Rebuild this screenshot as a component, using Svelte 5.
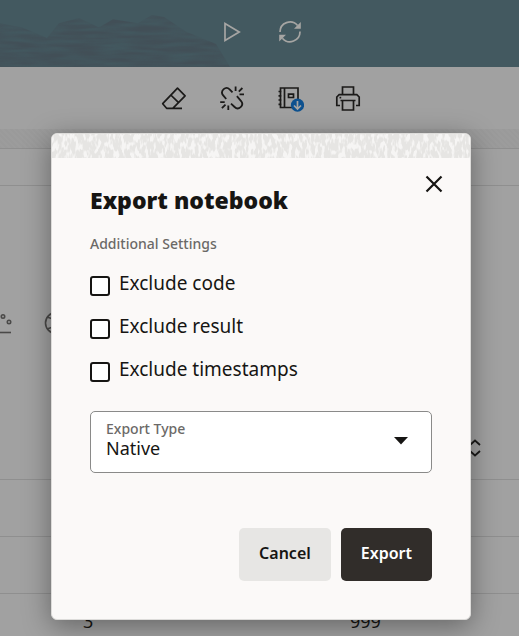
<script>
  let excludes = $state([
    { id: 'code', label: 'Exclude code', checked: false },
    { id: 'result', label: 'Exclude result', checked: false },
    { id: 'timestamps', label: 'Exclude timestamps', checked: false }
  ]);
  let exportType = $state('Native');
</script>

<div class="page">
  <header class="topbar">
    <svg class="waves" viewBox="0 0 230 50" preserveAspectRatio="none" aria-hidden="true">
      <defs>
        <filter id="grain" x="0" y="0" width="100%" height="100%" color-interpolation-filters="sRGB">
          <feTurbulence type="fractalNoise" baseFrequency="0.03 0.25" numOctaves="2" seed="4" />
          <feColorMatrix values="0 0 0 0 0.259  0 0 0 0 0.310  0 0 0 0 0.341  1.6 0 0 0 -0.2" />
          <feComposite operator="in" in2="SourceGraphic" />
        </filter>
      </defs>
      <path filter="url(#grain)" d="M0 8l22 4 25 10 12-14 20-5 20 9 14-8 25 4 14-8 12 2 22 14 30 12 14 22H0z" />
    </svg>
    <button class="icon" aria-label="Run">
      <svg width="24" height="24" viewBox="0 0 24 24" fill="none" stroke="#a6a5a3" stroke-width="1.7"><path d="M5 3.600v16.800L19.200 12z" /></svg>
    </button>
    <button class="icon" aria-label="Refresh">
      <svg width="24" height="24" viewBox="0 0 24 24" fill="none" stroke="#a6a5a3" stroke-width="1.700">
        <path d="M2 12A10 10 0 0 1 19.600 5.500M22 11.500A10 10 0 0 1 4.400 18.200" />
        <path d="M22.800 2v6.700H16zM1.200 21.500v-6.700H8z" fill="#a6a5a3" stroke="none" />
      </svg>
    </button>
  </header>

  <nav class="toolbar" aria-label="Notebook">
    <button class="icon" aria-label="Clear result">
      <svg width="26" height="26" viewBox="0 0 26 26" fill="none" stroke="#1b1a19" stroke-width="1.700" stroke-linejoin="round">
        <path d="M16.500 3.200l7.600 7.600-12.300 12.500H5.600l-3.900-4.600zM9.800 10l7.800 7.700M11 23.300h10" />
      </svg>
    </button>
    <button class="icon" aria-label="Unlink">
      <svg width="26" height="26" viewBox="0 0 26 26" fill="none" stroke="#1b1a19" stroke-width="1.800">
        <path d="M7.200 14L4 10.200C0.800 5.800 6.800 0.500 10.600 4.300L13.500 7.400M12 18.600l3.600 3.400c3.900 3.900 10-1.700 6.500-5.800l-4.200-5" />
        <path d="M16.600 1.500v4.500M23.400 3l-3.600 3.600M20.500 9.300H25M1.200 17.200h4.500M6.500 19.600l-3.600 3.600M9.300 20.500V25" />
      </svg>
    </button>
    <button class="icon" aria-label="Export notebook">
      <svg width="28" height="28" viewBox="0 0 28 28" fill="none" stroke="#1b1a19" stroke-width="1.700">
        <path d="M4.500 4H22v19.500H4.500zM8.500 4v19.500M12.500 10.200h5v3.300h-5zM2.500 7.500h3M2.500 11.800h3M2.500 16h3M2.500 20.300h3" />
        <circle cx="21.500" cy="21.200" r="6.600" fill="#0d518f" stroke="none" />
        <path d="M21.500 17v8M18 21.500l3.500 3.500 3.500-3.500" stroke="#a6a5a3" />
      </svg>
    </button>
    <button class="icon" aria-label="Print">
      <svg width="26" height="26" viewBox="0 0 26 26" fill="none" stroke="#1b1a19" stroke-width="1.700">
        <path d="M7.500 9.700V2h11v7.700M5 20.500H1.800V12l2.400-2.300h17.600l2.400 2.300v8.500H21M5.500 15.500h15M7.500 15.500v9.500h11v-9.500" />
        <path d="M4.500 12.600h1.700" />
      </svg>
    </button>
  </nav>

  <div class="band"></div>
  <div class="strip"></div>
  <section class="results">
    <div class="charts">
      <svg width="12" height="24" viewBox="0 0 12 24" fill="none" stroke="#4a4948" stroke-width="1.600" aria-hidden="true">
        <circle cx="3" cy="5.500" r="1.700" /><circle cx="9" cy="11" r="1.700" /><path d="M0 21.500h11" />
      </svg>
      <svg width="24" height="24" viewBox="0 0 24 24" fill="none" stroke="#4a4948" stroke-width="1.600" aria-hidden="true">
        <circle cx="12" cy="12" r="10.500" /><path d="M3 6q9 4 18 0M3 18q9-4 18 0M12 1.500q-7 10 0 21" />
      </svg>
    </div>
    <div class="sort">
      <svg width="14" height="18" viewBox="0 0 14 18" fill="none" stroke="#1b1a19" stroke-width="1.800" aria-hidden="true">
        <path d="M2 6l5-4.500L12 6M2 12l5 4.500L12 12" />
      </svg>
    </div>
  </section>
  <div class="row"></div>
  <div class="row"></div>
  <div class="row values"><span>3</span><span>999</span></div>
</div>

<div class="overlay">
  <form class="dialog" role="dialog" aria-labelledby="title" onsubmit={(e) => e.preventDefault()}>
    <svg class="texture" aria-hidden="true">
      <defs>
        <filter id="weave" x="0" y="0" width="100%" height="100%" color-interpolation-filters="sRGB">
          <feTurbulence type="fractalNoise" baseFrequency="0.3 0.12" numOctaves="2" seed="11" />
          <feColorMatrix values="0 0 0 0 0.965  0 0 0 0 0.961  0 0 0 0 0.957  6 0 0 0 -2.800" />
        </filter>
      </defs>
      <rect width="100%" height="100%" fill="#e6e5e3" />
      <rect width="100%" height="100%" filter="url(#weave)" />
    </svg>
    <div class="body">
      <div class="head">
        <h1 id="title">Export notebook</h1>
        <button type="button" class="close" aria-label="Close">
          <svg width="18" height="18" viewBox="0 0 18 18" fill="none" stroke="#161513" stroke-width="2.200"><path d="M1.500 1.500l15 15M16.500 1.500l-15 15" /></svg>
        </button>
      </div>
      <fieldset>
        <legend>Additional Settings</legend>
        {#each excludes as item (item.id)}
          <div class="check">
            <input type="checkbox" id={item.id} bind:checked={item.checked} />
            <label for={item.id}>{item.label}</label>
          </div>
        {/each}
      </fieldset>
      <div class="field">
        <label for="type">Export Type</label>
        <select id="type" bind:value={exportType}>
          <option>Native</option>
        </select>
        <svg class="arrow" width="14" height="8" viewBox="0 0 14 8" aria-hidden="true"><path d="M0 0h14L7 7.500z" fill="#161513" /></svg>
      </div>
      <div class="actions">
        <button type="button">Cancel</button>
        <button type="submit" class="primary">Export</button>
      </div>
    </div>
  </form>
</div>

<style>
  :global(body) {
    background: #a1a1a1;
  }
  .page,
  .overlay {
    box-sizing: border-box;
    font-family: "Noto Sans", "Open Sans", sans-serif;
    color: #161513;
  }
  .page {
    height: 100vh;
    overflow: hidden;
    background: #a1a1a1;
  }
  button {
    font: inherit;
    color: inherit;
    border: 0;
    padding: 0;
    cursor: pointer;
  }
  .icon {
    display: grid;
    place-items: center;
    width: 28px;
    height: 28px;
    background: none;
  }
  .topbar {
    position: relative;
    display: flex;
    align-items: center;
    justify-content: center;
    gap: 30px;
    height: 67px;
    padding: 0 0 4px 2px;
    box-sizing: border-box;
    background: #435960;
  }
  .waves {
    position: absolute;
    left: 0;
    bottom: 0;
    width: 230px;
    height: 52px;
  }
  .toolbar {
    display: flex;
    align-items: center;
    justify-content: center;
    gap: 30px;
    height: 62px;
    padding-left: 2px;
  }
  .band {
    height: 19px;
    background: repeating-linear-gradient(45deg, #9a9a9a 0 2px, #9c9c9c 2px 4px);
    border-bottom: 1px solid #8f8f8f;
  }
  .strip {
    height: 36px;
    border-bottom: 1px solid #8f8f8f;
  }
  .results {
    display: flex;
    flex-direction: column;
    justify-content: space-between;
    box-sizing: border-box;
    height: 294px;
    padding: 125px 37px 22px 0;
    border-bottom: 1px solid #8f8f8f;
  }
  .charts {
    display: flex;
    gap: 32px;
  }
  .sort {
    display: flex;
    justify-content: flex-end;
  }
  .row {
    height: 56px;
    border-bottom: 1px solid #8f8f8f;
  }
  .values {
    display: grid;
    grid-template-columns: 1fr 1fr;
    align-items: start;
    padding: 15px 0 0 83px;
    font-size: 18px;
    line-height: 24px;
  }
  .values span + span {
    padding-left: 49px;
  }
  .overlay {
    position: absolute;
    inset: 0;
    padding: 133px 48px 16px 51px;
    overflow: hidden;
  }
  .dialog {
    max-width: 480px;
    margin: 0 auto;
    box-sizing: border-box;
    overflow: hidden;
    border: 1px solid #dddcda;
    border-radius: 6px;
    background: #fbf9f8;
    box-shadow: 0 6px 28px rgba(0, 0, 0, 0.38);
  }
  .texture {
    display: block;
    width: 100%;
    height: 24px;
  }
  .body {
    padding: 14px 38px 38px;
  }
  .head {
    display: flex;
    justify-content: space-between;
    align-items: flex-start;
    margin-right: -20px;
  }
  h1 {
    margin: 12px 0 0;
    font-size: 23px;
    line-height: 32px;
    font-weight: 900;
  }
  .close {
    display: grid;
    place-items: center;
    width: 36px;
    height: 24px;
    background: none;
  }
  fieldset {
    margin: 0;
    padding: 18px 0 0;
    border: 0;
  }
  legend {
    float: left;
    width: 100%;
    padding: 0;
    margin: 0 0 16px;
    font-size: 14px;
    line-height: 20px;
    font-weight: 500;
    color: #6b6967;
  }
  .check {
    clear: both;
    display: flex;
    gap: 9px;
    height: 43px;
    font-size: 19px;
    line-height: 26px;
  }
  .check input {
    appearance: none;
    box-sizing: border-box;
    width: 20px;
    height: 20px;
    margin: 6px 0 0;
    border: 2px solid #161513;
    border-radius: 3px;
    background: #fff;
  }
  .check input:checked {
    background: #161513;
  }
  .field {
    position: relative;
    margin-top: 12px;
  }
  .field label {
    position: absolute;
    left: 16px;
    top: 8px;
    font-size: 14px;
    line-height: 20px;
    font-weight: 500;
    color: #6b6967;
    pointer-events: none;
  }
  select {
    display: block;
    appearance: none;
    box-sizing: border-box;
    width: 100%;
    height: 62px;
    padding: 23px 48px 11px 15px;
    border: 1px solid #8a8a89;
    border-radius: 5px;
    background: #fff;
    color: #161513;
    font-family: inherit;
    font-size: 18px;
    line-height: 26px;
  }
  .arrow {
    position: absolute;
    right: 24px;
    top: 26px;
    pointer-events: none;
  }
  .actions {
    display: flex;
    justify-content: flex-end;
    gap: 10px;
    margin-top: 55px;
  }
  .actions button {
    height: 53px;
    padding: 0 20px 3px;
    border-radius: 5px;
    background: #e7e6e4;
    font-size: 16px;
    font-weight: 600;
  }
  .actions .primary {
    background: #312d2a;
    color: #fff;
  }
</style>
